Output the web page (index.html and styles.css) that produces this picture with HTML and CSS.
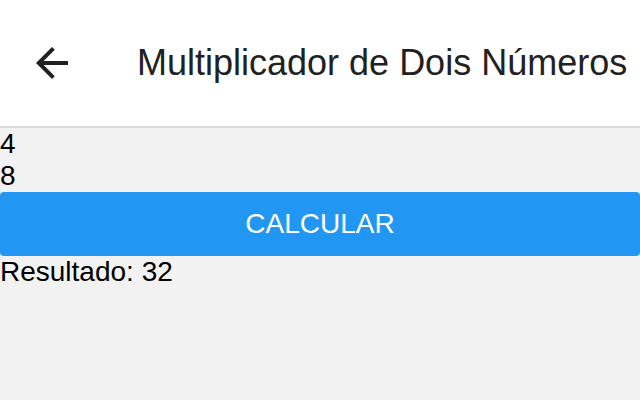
FILE: index.html
```html
<!DOCTYPE html>
<html>
<head>
<meta charset="utf-8">
<link rel="stylesheet" href="styles.css">
</head>
<body>
<header class="appbar">
  <button class="back" aria-label="Voltar">
    <svg viewBox="0 0 24 24" width="48" height="48"><path d="M20 11H7.83l5.59-5.59L12 4l-8 8 8 8 1.41-1.41L7.83 13H20v-2z" fill="#212121"/></svg>
  </button>
  <h1 class="title">Multiplicador de Dois Números</h1>
</header>
<main class="content">
  <div class="line">4</div>
  <div class="line">8</div>
  <button class="calc">CALCULAR</button>
  <div class="line">Resultado: 32</div>
</main>
</body>
</html>
```
FILE: styles.css
```css
html, body {
  margin: 0;
  padding: 0;
  height: 100%;
}
body {
  background: #f2f2f2;
  font-family: "Liberation Sans", Arial, sans-serif;
  color: #000;
}
.appbar {
  height: 126px;
  background: #fff;
  border-bottom: 2px solid #d9d9d9;
  display: flex;
  align-items: center;
}
.back {
  width: 48px;
  height: 48px;
  margin-left: 28px;
  padding: 0;
  border: none;
  background: none;
  display: flex;
}
.title {
  margin: 0 0 0 61px;
  font-family: "Liberation Sans", Arial, sans-serif;
  font-weight: 400;
  font-size: 36px;
  color: #212121;
  white-space: nowrap;
}
.content {
  display: flex;
  flex-direction: column;
}
.line {
  font-size: 28px;
  line-height: 32px;
}
.calc {
  height: 64px;
  border: none;
  border-radius: 4px;
  background: #2196f3;
  color: #fff;
  font-family: "Liberation Sans", Arial, sans-serif;
  font-size: 28px;
  padding: 0;
}
```
